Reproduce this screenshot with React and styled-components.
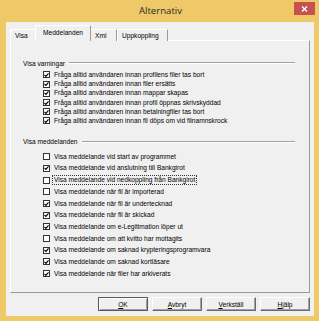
import React from "react";
import styled, { createGlobalStyle } from "styled-components";

const GlobalStyle = createGlobalStyle`
  html, body {
    margin: 0;
    padding: 0;
    background: #efc867;
  }
  body {
    font-family: "Liberation Sans", Arial, sans-serif;
  }
`;

const Window = styled.div`
  width: 319px;
  height: 321px;
  box-sizing: border-box;
  background: #efc867;
  display: flex;
  flex-direction: column;
  padding: 0 5px 5px 6px;
`;

const TitleBar = styled.div`
  height: 22px;
  flex: none;
  display: grid;
  grid-template-columns: 1fr auto 1fr;
  margin-right: -1px;
`;

const Title = styled.div`
  grid-column: 2;
  font-family: "Open Sans", "Noto Sans", sans-serif;
  font-size: 9.6px;
  line-height: 22px;
  color: #2a2a2a;
`;

const CloseButton = styled.div`
  grid-column: 3;
  justify-self: end;
  margin-top: 2px;
  width: 21px;
  height: 13px;
  background: #c75050;
  display: flex;
  align-items: center;
  justify-content: center;
`;

const Client = styled.div`
  flex: 1;
  background: #f0f0f0;
  display: flex;
  flex-direction: column;
  padding: 3px 4px 5px 4px;
`;

const TabStrip = styled.div`
  display: flex;
  align-items: flex-end;
  height: 16px;
  margin-bottom: -1px;
  position: relative;
  z-index: 1;
`;

const Tab = styled.div`
  box-sizing: border-box;
  width: ${(p) => p.$w}px;
  height: ${(p) => (p.$active ? 16 : 12)}px;
  margin-left: ${(p) => (p.$active ? -2 : 0)}px;
  margin-right: ${(p) => (p.$active ? -1 : 0)}px;
  padding-left: ${(p) => p.$pad}px;
  padding-top: ${(p) => (p.$active ? 2 : 1)}px;
  background: #f0f0f0;
  border-top: 1px solid #ffffff;
  border-left: 1px solid #ffffff;
  border-right: 1px solid #9a9a9a;
  border-radius: 1px 1px 0 0;
  font-size: 6.6px;
  line-height: 9px;
  color: #000;
  position: relative;
  z-index: ${(p) => (p.$active ? 2 : 0)};
`;

const Panel = styled.div`
  flex: 1;
  box-sizing: border-box;
  border-top: 1px solid #ffffff;
  border-left: 1px solid #ffffff;
  border-right: 1px solid #9a9a9a;
  border-bottom: 1px solid #9a9a9a;
  padding: 18px 14px 0 12px;
  display: flex;
  flex-direction: column;
`;

const GroupHeader = styled.div`
  display: flex;
  align-items: center;
  gap: 4px;
  height: 8px;
  font-size: 6.6px;
  color: #000;
  margin-top: ${(p) => p.$mt || 0}px;
`;

const HeaderLine = styled.div`
  flex: 1;
  border-top: 1px solid #a0a0a0;
  border-bottom: 1px solid #ffffff;
`;

const List = styled.div`
  display: flex;
  flex-direction: column;
  margin-top: ${(p) => p.$mt}px;
`;

const Row = styled.div`
  height: ${(p) => p.$h}px;
  display: flex;
  align-items: center;
  gap: 4px;
  padding-left: 20px;
  font-size: 6.6px;
  color: #000;
  white-space: nowrap;
`;

const Box = styled.div`
  width: 7px;
  height: 7px;
  box-sizing: border-box;
  border: 1px solid #333333;
  background: #ffffff;
  display: flex;
  align-items: center;
  justify-content: center;
  flex: none;
`;

const Label = styled.span`
  line-height: 8px;
  padding: 0 1px;
  margin-left: -1px;
  outline: ${(p) => (p.$focus ? "1px dotted #333" : "none")};
`;

const ButtonRow = styled.div`
  display: flex;
  justify-content: flex-end;
  gap: 4px;
  margin-top: 4px;
  height: 14px;
`;

const Button = styled.div`
  width: 50px;
  height: 14px;
  box-sizing: border-box;
  border: 1px solid;
  border-color: ${(p) =>
    p.$default ? "#5a5a5a" : "#ffffff #6a6a6a #6a6a6a #ffffff"};
  box-shadow: ${(p) =>
    p.$default
      ? "inset 1px 1px #ffffff, inset -1px -1px #a0a0a0"
      : "inset -1px -1px #a0a0a0"};
  background: #f0f0f0;
  display: flex;
  align-items: center;
  justify-content: center;
  font-size: 6.6px;
  color: #000;
`;

const Check = () => (
  <svg width="6" height="6" viewBox="0 0 6 6">
    <path d="M0.6 3 L2.3 4.7 L5.4 1" fill="none" stroke="#000" strokeWidth="1.3" />
  </svg>
);

const warnings = [
  "Fråga alltid användaren innan profilens filer tas bort",
  "Fråga alltid användaren innan filer ersätts",
  "Fråga alltid användaren innan mappar skapas",
  "Fråga alltid användaren innan profil öppnas skrivskyddad",
  "Fråga alltid användaren innan betalningfiler tas bort",
  "Fråga alltid användaren innan fil döps om vid filnamnskrock",
];

const messages = [
  ["Visa meddelande vid start av programmet", false],
  ["Visa meddelande vid anslutning till Bankgirot", true],
  ["Visa meddelande vid nedkoppling från Bankgirot", false, true],
  ["Visa meddelande när fil är importerad", false],
  ["Visa meddelande när fil är undertecknad", true],
  ["Visa meddelande när fil är skickad", true],
  ["Visa meddelande om e-Legitimation löper ut", true],
  ["Visa meddelande om att kvitto har mottagits", false],
  ["Visa meddelande om saknad krypteringsprogramvara", true],
  ["Visa meddelande om saknad kortläsare", true],
  ["Visa meddelande när filer har arkiverats", true],
];

const Option = ({ h, checked, focus, children }) => (
  <Row $h={h}>
    <Box>{checked && <Check />}</Box>
    <Label $focus={focus}>{children}</Label>
  </Row>
);

export default function App() {
  return (
    <>
      <GlobalStyle />
      <Window>
        <TitleBar>
          <Title>Alternativ</Title>
          <CloseButton>
            <svg width="7" height="6" viewBox="0 0 7 6">
              <path d="M1 0.5 L6 5.5 M6 0.5 L1 5.5" stroke="#fff" strokeWidth="1.4" />
            </svg>
          </CloseButton>
        </TitleBar>
        <Client>
          <TabStrip>
            <Tab $w={27} $pad={4}>Visa</Tab>
            <Tab $w={56} $pad={7} $active>Meddelanden</Tab>
            <Tab $w={27} $pad={4}>Xml</Tab>
            <Tab $w={51} $pad={4}>Uppkoppling</Tab>
          </TabStrip>
          <Panel>
            <GroupHeader>
              Visa varningar
              <HeaderLine />
            </GroupHeader>
            <List $mt={3.4}>
              {warnings.map((t) => (
                <Option key={t} h={9.2} checked>
                  {t}
                </Option>
              ))}
            </List>
            <GroupHeader $mt={12.4}>
              Visa meddelanden
              <HeaderLine />
            </GroupHeader>
            <List $mt={5}>
              {messages.map(([t, c, f]) => (
                <Option key={t} h={11.7} checked={c} focus={f}>
                  {t}
                </Option>
              ))}
            </List>
          </Panel>
          <ButtonRow>
            <Button $default>
              <span><u>O</u>K</span>
            </Button>
            <Button>
              <span><u>A</u>vbryt</span>
            </Button>
            <Button>
              <span><u>V</u>erkställ</span>
            </Button>
            <Button>
              <span><u>H</u>jälp</span>
            </Button>
          </ButtonRow>
        </Client>
      </Window>
    </>
  );
}
